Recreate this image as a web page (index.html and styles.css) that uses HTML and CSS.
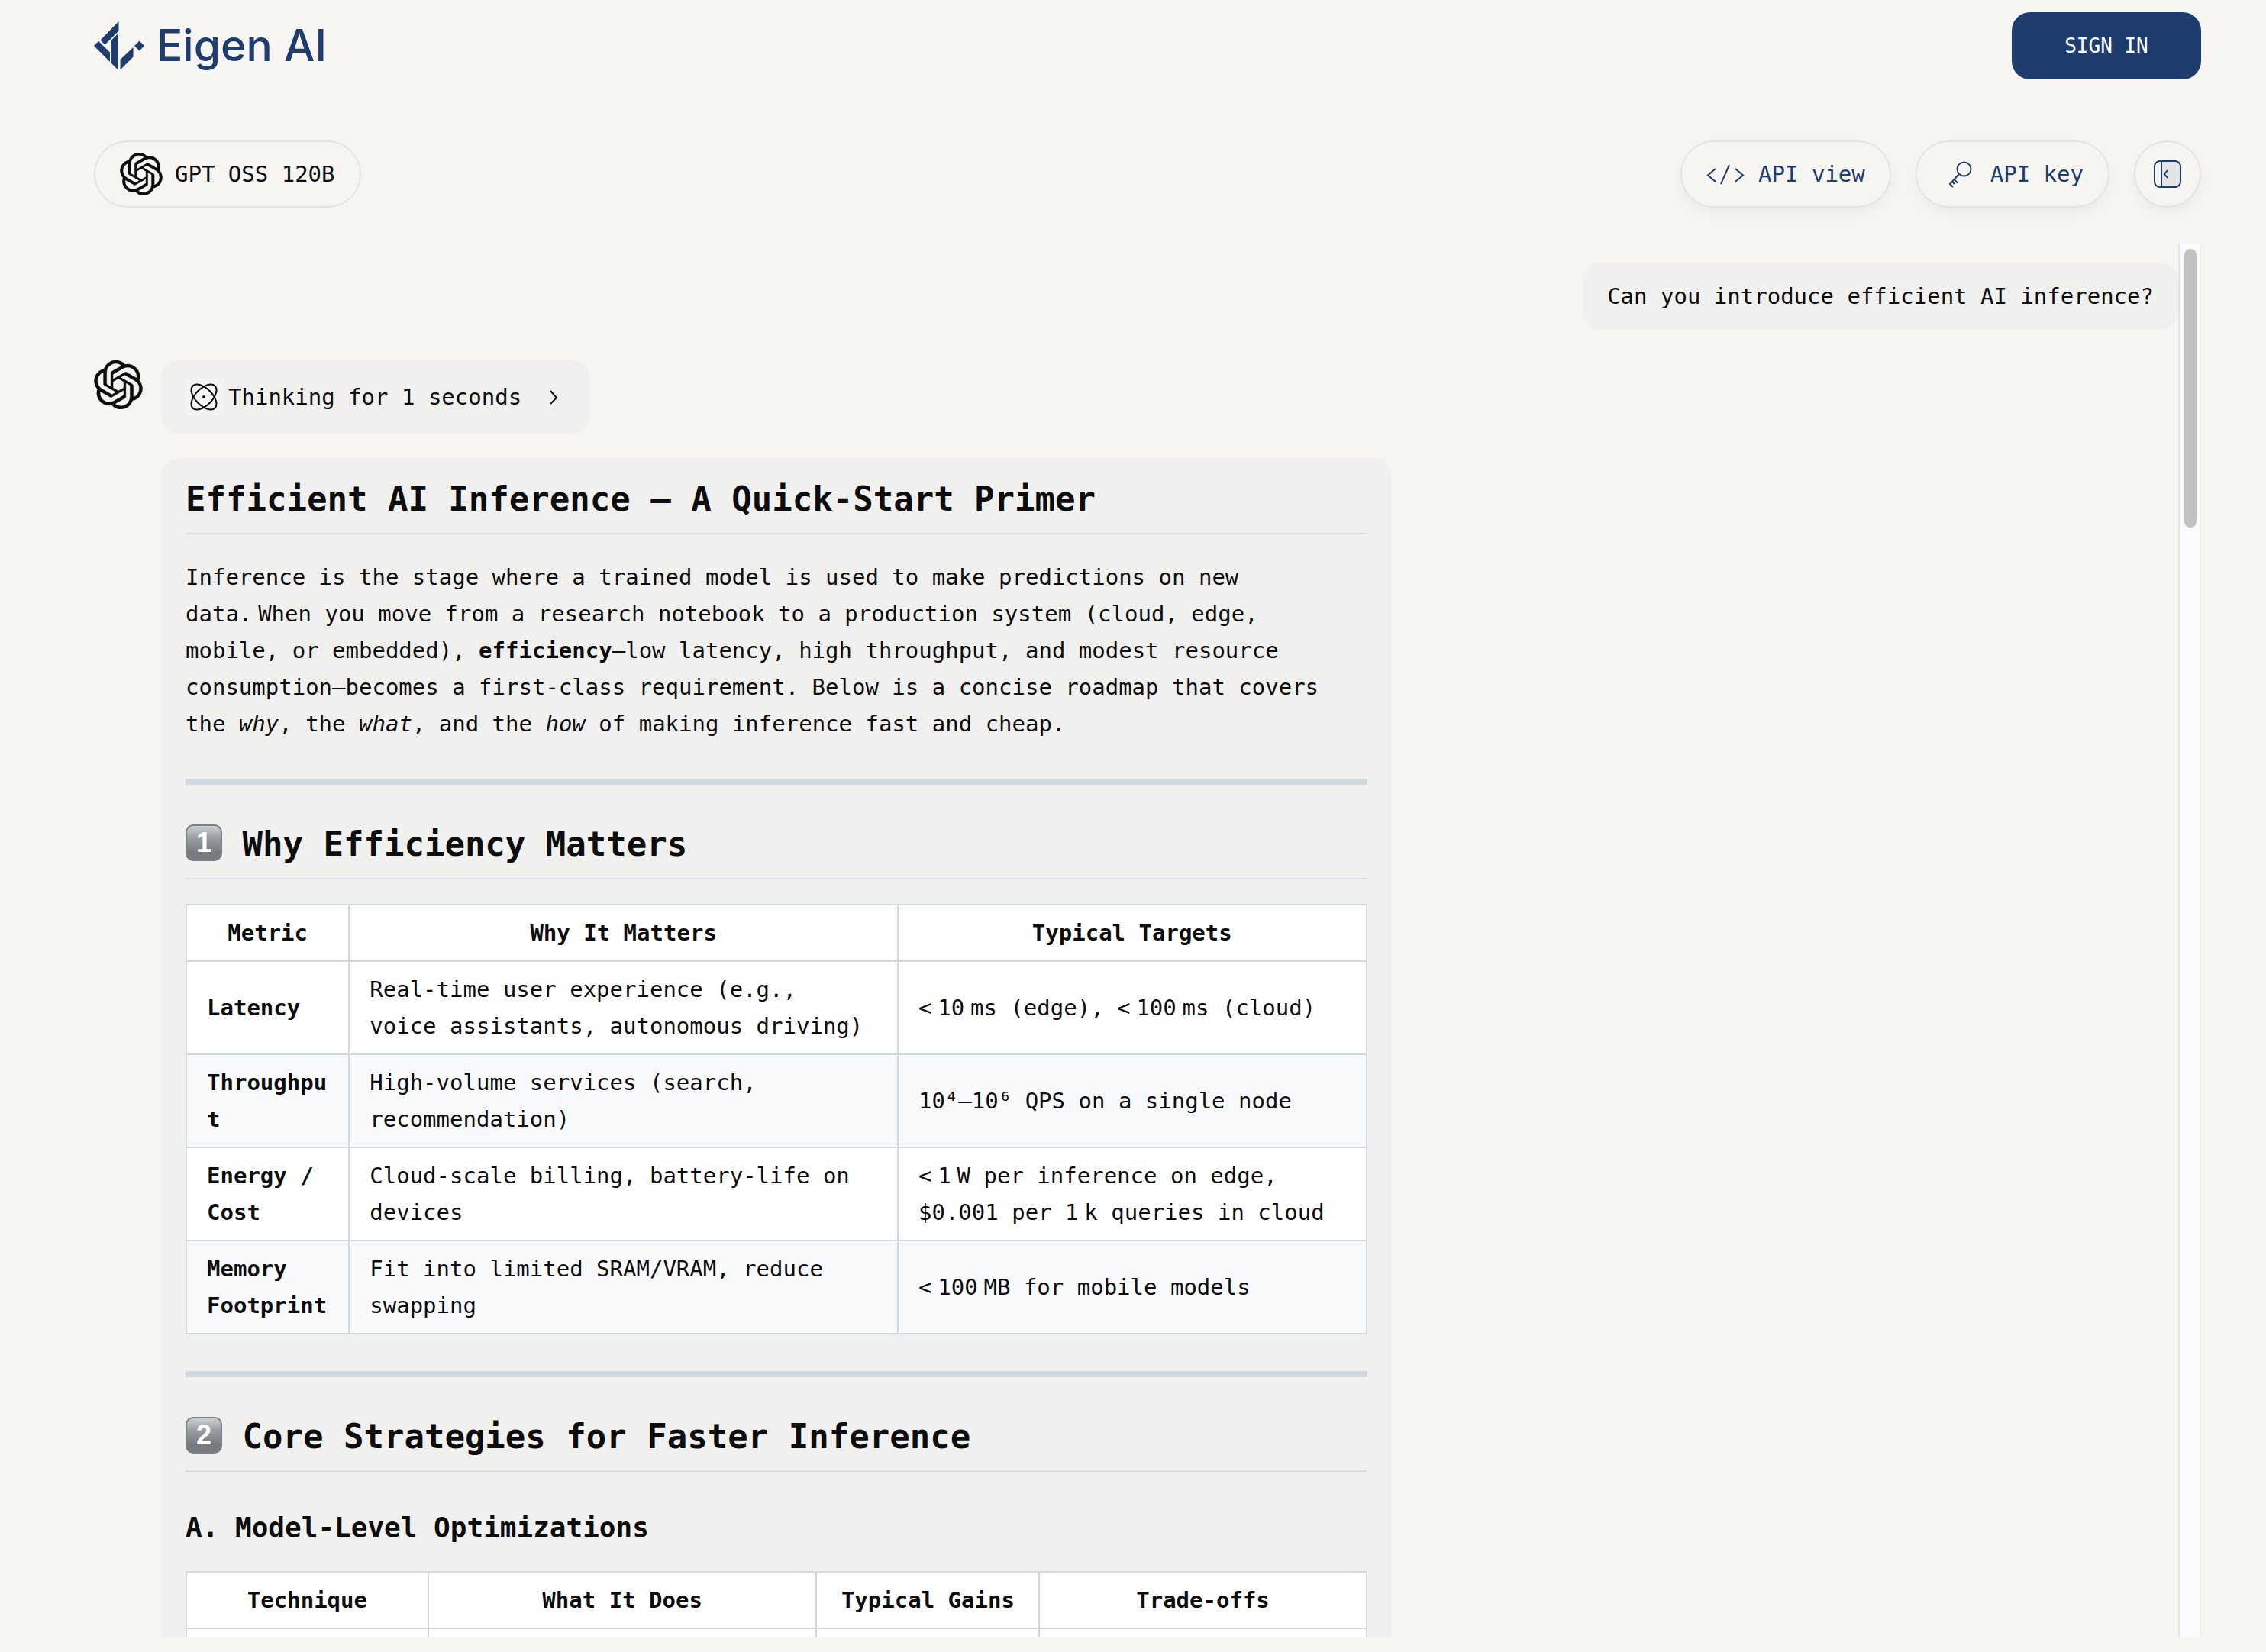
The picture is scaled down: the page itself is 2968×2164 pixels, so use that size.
FILE: index.html
```
<!DOCTYPE html>
<html lang="en">
<head>
<meta charset="utf-8">
<title>Eigen AI</title>
<link rel="stylesheet" href="styles.css">
</head>
<body>
<svg width="0" height="0" class="defs" aria-hidden="true">
  <symbol id="openai" viewBox="0 0 24 24"><path fill="currentColor" stroke="currentColor" stroke-width=".15" d="M22.2819 9.8211a5.9847 5.9847 0 0 0-.5157-4.9108 6.0462 6.0462 0 0 0-6.5098-2.9A6.0651 6.0651 0 0 0 4.9807 4.1818a5.9847 5.9847 0 0 0-3.9977 2.9 6.0462 6.0462 0 0 0 .7427 7.0966 5.98 5.98 0 0 0 .511 4.9107 6.051 6.051 0 0 0 6.5146 2.9001A5.9847 5.9847 0 0 0 13.2599 24a6.0557 6.0557 0 0 0 5.7718-4.2058 5.9894 5.9894 0 0 0 3.9977-2.9001 6.0557 6.0557 0 0 0-.7475-7.0729zm-9.022 12.6081a4.4755 4.4755 0 0 1-2.8764-1.0408l.1419-.0804 4.7783-2.7582a.7948.7948 0 0 0 .3927-.6813v-6.7369l2.02 1.1686a.071.071 0 0 1 .038.052v5.5826a4.504 4.504 0 0 1-4.4945 4.4944zm-9.6607-4.1254a4.4708 4.4708 0 0 1-.5346-3.0137l.142.0852 4.783 2.7582a.7712.7712 0 0 0 .7806 0l5.8428-3.3685v2.3324a.0804.0804 0 0 1-.0332.0615L9.74 19.9502a4.4992 4.4992 0 0 1-6.1408-1.6464zM2.3408 7.8956a4.485 4.485 0 0 1 2.3655-1.9728V11.6a.7664.7664 0 0 0 .3879.6765l5.8144 3.3543-2.0201 1.1685a.0757.0757 0 0 1-.071 0l-4.8303-2.7865A4.504 4.504 0 0 1 2.3408 7.872zm16.5963 3.8558L13.1038 8.364 15.1192 7.2a.0757.0757 0 0 1 .071 0l4.8303 2.7913a4.4944 4.4944 0 0 1-.6765 8.1042v-5.6772a.79.79 0 0 0-.407-.667zm2.0107-3.0231l-.142-.0852-4.7735-2.7818a.7759.7759 0 0 0-.7854 0L9.409 9.2297V6.8974a.0662.0662 0 0 1 .0284-.0615l4.8303-2.7866a4.4992 4.4992 0 0 1 6.6802 4.66zM8.3065 12.863l-2.02-1.1638a.0804.0804 0 0 1-.038-.0567V6.0742a4.4992 4.4992 0 0 1 7.3757-3.4537l-.142.0805L8.704 5.459a.7948.7948 0 0 0-.3927.6813zm1.0976-2.3654l2.602-1.4998 2.6069 1.4998v2.9994l-2.5974 1.4997-2.6067-1.4997Z"/></symbol>
</svg>
<div class="page">
  <header class="header">
    <a class="brand" href="#">
      <svg class="brand-mark" viewBox="0 0 66 64" aria-hidden="true"><path d="M32.500 0V12.500L14.500 30.500 8.500 24.500ZM6 26 21 40.500V53L0 32ZM22.500 25 32 15.500V64L22.500 54.500ZM34.500 50 51.500 34V46.500L34.500 63.500ZM59.500 25.500 66 32 59.500 38.500 53 32Z"/></svg>
      <span>Eigen AI</span>
    </a>
    <button class="sign-in" type="button">SIGN IN</button>
  </header>

  <nav class="toolbar">
    <button class="pill model" type="button"><svg class="model-icon" aria-hidden="true"><use href="#openai"/></svg>GPT OSS 120B</button>
    <div class="actions">
      <button class="pill action" type="button"><svg class="code-icon" viewBox="0 0 52 48" aria-hidden="true"><path d="M12 17 2 25.500 12 34M30 12 19 37M38 17 48 25.500 38 34"/></svg>API view</button>
      <button class="pill action" type="button"><svg class="key-icon" viewBox="0 0 48 48" aria-hidden="true"><circle cx="29.500" cy="17.500" r="9"/><path d="M23 24 11 37 15 41M17 31 21 36M14 34 17 37"/></svg>API key</button>
      <button class="pill action round" type="button" aria-label="Toggle panel"><svg class="panel-icon" viewBox="0 0 36 36" aria-hidden="true"><path class="shade" d="M10 1H28A7 7 0 0 1 35 8V28A7 7 0 0 1 28 35H10Z"/><rect x="1" y="1" width="34" height="34" rx="7"/><path d="M10 1V35M18 13 14 18 18 23"/></svg></button>
    </div>
  </nav>

  <main class="chat">
    <div class="messages">
      <p class="question">Can you introduce efficient AI inference?</p>
      <div class="reply">
        <svg class="avatar" aria-hidden="true"><use href="#openai"/></svg>
        <div class="reply-body">
          <button class="thinking" type="button"><svg class="atom" viewBox="0 0 48 48" aria-hidden="true"><ellipse cx="24" cy="24" rx="11" ry="20.500" transform="rotate(45 24 24)"/><ellipse cx="24" cy="24" rx="11" ry="20.500" transform="rotate(-45 24 24)"/><circle class="dot" cx="24" cy="24" r="2"/></svg>Thinking for 1 seconds<svg class="chevron" viewBox="0 0 32 32" aria-hidden="true"><path d="M12 8 20 17 12 25"/></svg></button>
          <article class="answer">
            <h2>Efficient AI Inference – A Quick-Start Primer</h2>
            <p>Inference is the stage where a trained model is used to make predictions on new data.<span class="thin">&#8239;</span>When you move from a research notebook to a production system (cloud, edge,<br>mobile, or embedded), <strong>efficiency</strong>—low latency, high throughput, and modest resource consumption—becomes a first-class requirement. Below is a concise roadmap that covers the <em>why</em>, the <em>what</em>, and the <em>how</em> of making inference fast and cheap.</p>
            <hr>
            <h2><span class="keycap">1</span> Why Efficiency Matters</h2>
            <table class="metrics">
              <thead><tr><th>Metric</th><th>Why It Matters</th><th>Typical Targets</th></tr></thead>
              <tbody>
                <tr><td><strong>Latency</strong></td><td>Real-time user experience (e.g.,<br>voice assistants, autonomous driving)</td><td>&lt;<span class="thin">&#8239;</span>10<span class="thin">&#8239;</span>ms (edge), &lt;<span class="thin">&#8239;</span>100<span class="thin">&#8239;</span>ms (cloud)</td></tr>
                <tr><td><strong>Throughput</strong></td><td>High-volume services (search, recommendation)</td><td>10⁴–10⁶ QPS on a single node</td></tr>
                <tr><td><strong>Energy / Cost</strong></td><td>Cloud-scale billing, battery-life on devices</td><td>&lt;<span class="thin">&#8239;</span>1<span class="thin">&#8239;</span>W per inference on edge, $0.001 per 1<span class="thin">&#8239;</span>k queries in cloud</td></tr>
                <tr><td><strong>Memory Footprint</strong></td><td>Fit into limited SRAM/VRAM, reduce swapping</td><td>&lt;<span class="thin">&#8239;</span>100<span class="thin">&#8239;</span>MB for mobile models</td></tr>
              </tbody>
            </table>
            <hr>
            <h2><span class="keycap">2</span> Core Strategies for Faster Inference</h2>
            <h3>A. Model-Level Optimizations</h3>
            <table class="techniques">
              <thead><tr><th>Technique</th><th>What It Does</th><th>Typical Gains</th><th>Trade-offs</th></tr></thead>
              <tbody><tr><td>&nbsp;</td><td></td><td></td><td></td></tr></tbody>
            </table>
          </article>
        </div>
      </div>
    </div>
    <div class="scrollbar" aria-hidden="true"><div class="thumb"></div></div>
  </main>
</div>
</body>
</html>
```
FILE: styles.css
```
:root {
  --bg: #f6f5f1;
  --card: #f0f0ee;
  --navy: #1e3d6e;
  --ink: #0d0d0d;
  --rule: #d1d9e0;
}
* { box-sizing: border-box; }
body {
  margin: 0;
  background: var(--bg);
  color: var(--ink);
  font: 29px/48px "DejaVu Sans Mono", monospace;
}
button {
  font: inherit;
  color: inherit;
  border: 0;
  background: none;
  padding: 0;
  cursor: pointer;
}
svg { flex: none; }
.defs { display: none; }
.page {
  display: flex;
  flex-direction: column;
  height: 100vh;
  padding: 16px 85px 20px 123px;
}
.header, .toolbar {
  display: flex;
  justify-content: space-between;
  align-items: center;
}
.brand {
  display: flex;
  align-items: center;
  gap: 16px;
  color: var(--navy);
  font: 500 57px/64px Inter, sans-serif;
  text-decoration: none;
}
.brand-mark { width: 66px; height: 64px; fill: currentColor; }
.sign-in {
  width: 248px;
  height: 88px;
  border-radius: 24px;
  background: var(--navy);
  color: #fff;
  font-size: 26px;
}
.toolbar { margin: 80px 0 48px; }
.pill {
  display: flex;
  align-items: center;
  gap: 16px;
  height: 88px;
  padding: 0 32px;
  border: 2px solid #e4e4e2;
  border-radius: 44px;
  background: var(--bg);
}
.model-icon { width: 56px; height: 56px; }
.actions { display: flex; gap: 32px; }
.action {
  color: var(--navy);
  box-shadow: 0 8px 16px rgba(0, 0, 0, .04);
}
.action svg { fill: none; stroke: currentColor; stroke-width: 2; }
.code-icon { width: 52px; height: 48px; }
.key-icon { width: 48px; height: 48px; }
.round { width: 88px; padding: 0; justify-content: center; }
.panel-icon { width: 36px; height: 36px; }
.panel-icon .shade { fill: #e4e4e4; stroke: none; }

.chat { flex: 1; min-height: 0; display: flex; }
.messages { flex: 1; min-width: 0; overflow: hidden; padding-top: 24px; }
.question {
  width: fit-content;
  margin: 0 0 40px auto;
  padding: 20px 32px;
  border-radius: 24px;
  background: var(--card);
}
.reply { display: flex; gap: 24px; }
.avatar { width: 64px; height: 64px; }
.reply-body { flex: 1; min-width: 0; }
.thinking {
  display: flex;
  align-items: center;
  height: 96px;
  margin-bottom: 32px;
  padding: 0 32px;
  border-radius: 24px;
  background: var(--card);
}
.atom {
  width: 48px;
  height: 48px;
  margin-right: 8px;
  background: #f3f3f1;
  fill: none;
  stroke: currentColor;
  stroke-width: 2;
}
.atom .dot { fill: currentColor; stroke: none; }
.chevron {
  width: 32px;
  height: 32px;
  margin-left: 26px;
  fill: none;
  stroke: currentColor;
  stroke-width: 2;
}
.answer {
  width: 61%;
  padding: 24px 32px;
  border-radius: 24px;
  background: var(--card);
}
.answer p { margin: 0; }
.answer h2 {
  margin: 0 0 32px;
  padding-bottom: 14px;
  border-bottom: 2px solid #dadddf;
  font-size: 44px;
  line-height: 60px;
}
.answer h3 { margin: 48px 0 32px; font-size: 36px; line-height: 50px; }
.answer hr { height: 8px; margin: 48px 0; border: 0; background: var(--rule); }
.thin { padding-right: 3px; font-family: "Noto Sans", sans-serif; line-height: 1; }
.keycap {
  display: inline-block;
  width: 48px;
  height: 48px;
  border: 2px solid #7b8084;
  border-radius: 10px;
  background: linear-gradient(#c9cfd3, #9a9ea3 35%, #757b7f 80%);
  color: #fff;
  font: 700 36px/44px "Liberation Sans", sans-serif;
  text-align: center;
  vertical-align: bottom;
  margin-bottom: 8px;
}
table {
  width: 100%;
  table-layout: fixed;
  border-collapse: collapse;
  background: #fff;
}
th, td {
  padding: 12px 26px;
  border: 2px solid var(--rule);
  overflow-wrap: anywhere;
}
td { text-align: left; }
tbody tr:nth-child(even) { background: #f8f9fb; }
.metrics th:nth-child(1) { width: 13.8%; }
.metrics th:nth-child(2) { width: 46.5%; }
.techniques th:nth-child(1) { width: 20.5%; }
.techniques th:nth-child(2) { width: 32.9%; }
.techniques th:nth-child(3) { width: 18.9%; }

.scrollbar {
  width: 30px;
  padding: 6px;
  border: solid #e4e5e5;
  border-width: 0 2px;
  border-right-color: #f1f2f3;
  background: #fafbfc;
}
.thumb { width: 16px; height: 365px; border-radius: 8px; background: #c1c3c3; }
```
